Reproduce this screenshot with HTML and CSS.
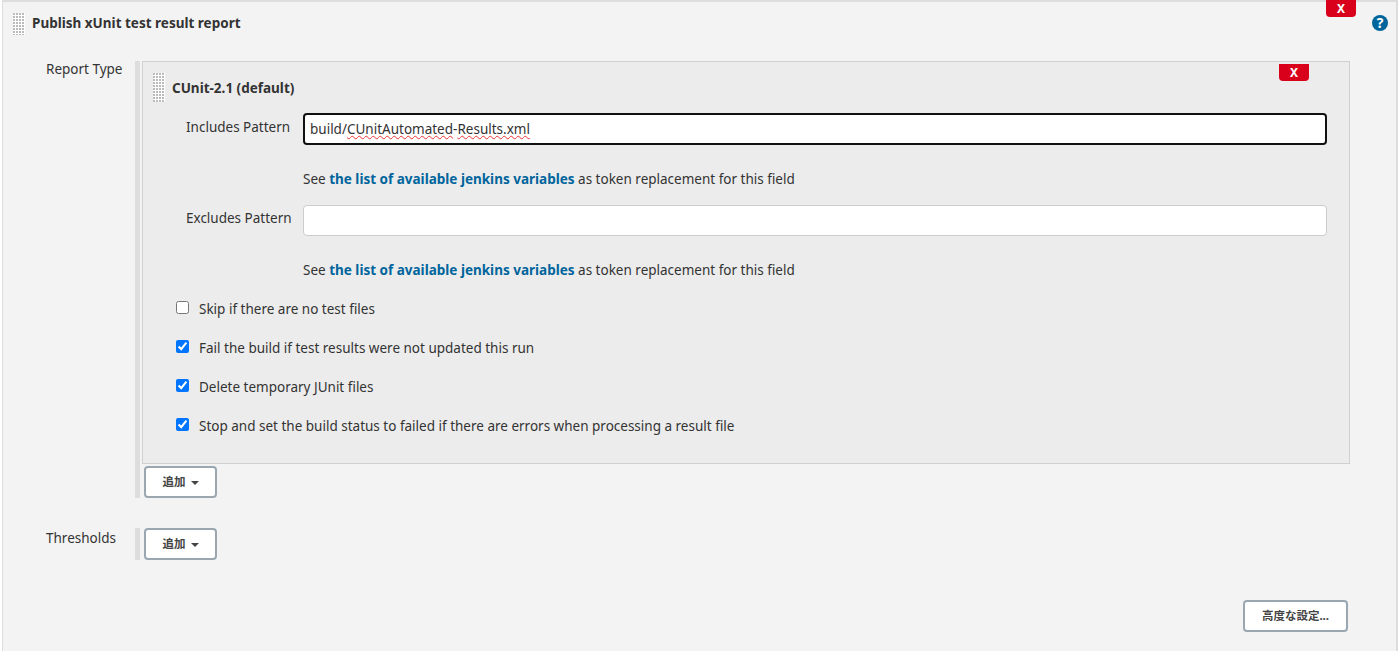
FILE: index.html
```html
<!DOCTYPE html>
<html lang="en">
<head>
    <meta charset="UTF-8">
    <title>Publish xUnit test result report</title>
    <link rel="stylesheet" href="styles.css">
</head>
<body>
    <div class="panel">
        <button class="delete delete-outer">X</button>
        <a class="help" href="#">?</a>

        <div class="panel-head">
            <div class="handle"></div>
            <b>Publish xUnit test result report</b>
        </div>

        <!-- Report Type -->
        <div class="row row-report">
            <label class="row-label">Report Type</label>
            <div class="row-body">
                <div class="inner">
                    <button class="delete delete-inner">X</button>
                    <div class="inner-head">
                        <div class="handle handle-tall"></div>
                        <b>CUnit-2.1 (default)</b>
                    </div>

                    <div class="field-row field-row-focus">
                        <label>Includes Pattern</label>
                        <div class="field field-focus">build/<span class="typo">CUnitAutomated</span>-<span class="typo">Results.xml</span></div>
                    </div>
                    <div class="hint">See <a href="#">the list of available jenkins variables</a> as token replacement for this field</div>

                    <div class="field-row">
                        <label>Excludes Pattern</label>
                        <div class="field"></div>
                    </div>
                    <div class="hint">See <a href="#">the list of available jenkins variables</a> as token replacement for this field</div>

                    <div class="checks">
                        <label class="check"><input type="checkbox">Skip if there are no test files</label>
                        <label class="check"><input type="checkbox" checked>Fail the build if test results were not updated this run</label>
                        <label class="check"><input type="checkbox" checked>Delete temporary JUnit files</label>
                        <label class="check"><input type="checkbox" checked>Stop and set the build status to failed if there are errors when processing a result file</label>
                    </div>
                </div>
                <button class="btn btn-add">追加<span class="caret"></span></button>
            </div>
        </div>

        <!-- Thresholds -->
        <div class="row row-thresholds">
            <label class="row-label">Thresholds</label>
            <div class="row-body">
                <button class="btn btn-add">追加<span class="caret"></span></button>
            </div>
        </div>

        <div class="panel-foot">
            <button class="btn btn-advanced">高度な設定...</button>
        </div>
    </div>
</body>
</html>
```

FILE: styles.css
```css
html, body {
    margin: 0;
    height: 651px;
    overflow: hidden;
    background-color: #fff;
}
body {
    font-family: "Noto Sans", "Noto Sans CJK JP", sans-serif;
    font-size: 13.5px;
    color: #333;
}
b {
    font-weight: 700;
}
.panel {
    position: relative;
    box-sizing: border-box;
    height: 651px;
    margin: 0 0 0 2px;
    background-color: #f3f3f3;
    border: 2px solid #ddd;
    border-left-width: 1px;
    border-bottom: none;
}
.panel-head {
    display: flex;
    align-items: center;
    height: 44px;
    padding-left: 10px;
}
.panel-head b {
    padding-bottom: 3px;
}
.handle {
    flex: none;
    width: 12px;
    height: 22px;
    margin-right: 7px;
    background-color: #fff;
    background-image: radial-gradient(circle at 1px 1px, #bbb 1px, transparent 1px);
    background-size: 3px 3px;
}
.handle-tall {
    height: 29px;
}
.delete {
    position: absolute;
    width: 30px;
    height: 17px;
    padding: 0;
    border: none;
    border-radius: 0 0 4px 4px;
    background-color: #d9001c;
    color: #fff;
    font-family: inherit;
    font-size: 12px;
    font-weight: 700;
    line-height: 17px;
}
.delete-outer {
    top: -2px;
    right: 40px;
}
.delete-inner {
    top: 2px;
    right: 40px;
}
.help {
    position: absolute;
    top: 13px;
    right: 8px;
    width: 16px;
    height: 16px;
    border-radius: 50%;
    background-color: #00659c;
    color: #fff;
    font-size: 14px;
    font-weight: 700;
    line-height: 16px;
    text-align: center;
    text-decoration: none;
}
.row {
    display: flex;
    align-items: flex-start;
}
.row-report {
    margin-top: 15px;
}
.row-thresholds {
    margin-top: 30px;
}
.row-label {
    flex: none;
    box-sizing: border-box;
    width: 132px;
    padding-left: 43px;
    line-height: 16px;
}
.row-thresholds .row-label {
    padding-top: 2px;
}
.row-body {
    flex: 1;
    border-left: 5px solid #ddd;
    padding-left: 2px;
    margin-right: 46px;
}
.inner {
    position: relative;
    box-sizing: border-box;
    height: 403px;
    padding: 0 0 0 10px;
    background-color: #ececec;
    border: 1px solid #d0d0d0;
}
.inner-head {
    display: flex;
    align-items: center;
    height: 51px;
}
.field-row {
    display: flex;
    align-items: flex-start;
    margin-right: 22px;
}
.field-row label {
    flex: none;
    box-sizing: border-box;
    width: 150px;
    padding-top: 3px;
    padding-left: 33px;
    line-height: 20px;
}
.field-row-focus label {
    padding-top: 4px;
}
.field {
    flex: 1;
    box-sizing: border-box;
    height: 31px;
    padding: 0 6px;
    background-color: #fff;
    border: 1px solid #ccc;
    border-radius: 4px;
    line-height: 29px;
}
.field-focus {
    height: 32px;
    padding: 0 5px;
    border: 2px solid #111;
}
.typo {
    text-decoration: underline wavy #e33;
    text-decoration-thickness: 1px;
}
.hint {
    margin-top: 25px;
    margin-bottom: 17px;
    padding-left: 150px;
    line-height: 18px;
}
.hint a {
    color: #00659c;
    font-weight: 700;
    text-decoration: none;
}
.checks {
    padding-top: 4px;
    margin-left: 23px;
}
.check {
    display: flex;
    align-items: center;
    height: 18px;
    margin-bottom: 21px;
}
.check input {
    margin: 0 10px 4px 0;
}
.btn {
    box-sizing: border-box;
    background-color: #fff;
    border: 2px solid #9aa7b0;
    border-radius: 4px;
    color: #444;
    font-family: inherit;
    font-size: 11.5px;
    font-weight: 700;
}
.btn-add {
    display: block;
    width: 73px;
    height: 32px;
    margin-left: 2px;
    padding: 0 0 2px;
}
.inner + .btn-add {
    margin-top: 2px;
}
.caret {
    display: inline-block;
    margin-left: 5px;
    vertical-align: middle;
    border-top: 4px solid #444;
    border-left: 4px solid transparent;
    border-right: 4px solid transparent;
}
.panel-foot {
    display: flex;
    justify-content: flex-end;
    margin-top: 40px;
    padding-right: 48px;
}
.btn-advanced {
    width: 105px;
    height: 32px;
    padding: 0 0 2px;
}
```
